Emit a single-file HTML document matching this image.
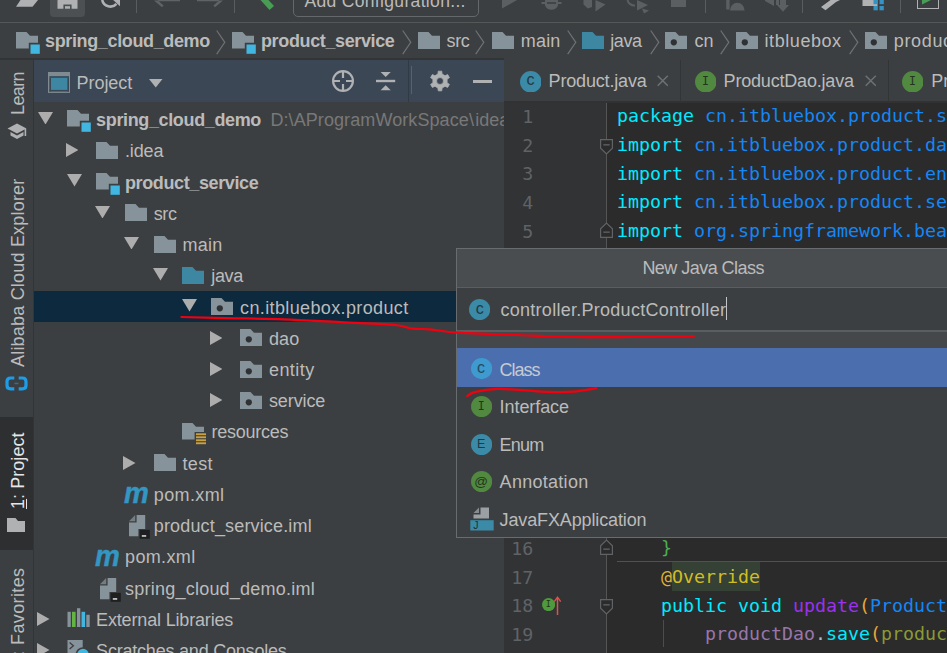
<!DOCTYPE html>
<html lang="en"><head><meta charset="utf-8"><title>IntelliJ IDEA - New Java Class</title>
<style>
html,body{margin:0;padding:0;background:#3c3f41;}
#app{position:relative;width:947px;height:653px;overflow:hidden;font-family:'Liberation Sans', sans-serif;}
.b{position:absolute;display:block;}
.t{position:absolute;white-space:nowrap;display:block;}
</style></head>
<body>
<div id="app">
<div class="b" style="left:0px;top:0px;width:947px;height:653px;background:#3c3f41;"></div>
<div class="b" style="left:0px;top:22px;width:947px;height:1px;background:#555759;"></div>
<svg class="b" style="left:14px;top:0px;" width="26" height="8" viewBox="0 0 26 8"><path d="M6.5,0H24L18.5,6.8H2Z" fill="#afb1b3"/></svg>
<div class="b" style="left:50px;top:-6px;width:35px;height:23px;background:#4c5052;border-radius:4px;"></div>
<svg class="b" style="left:57px;top:0px;" width="21" height="9" viewBox="0 0 21 9"><path d="M0.5,0H20.5V8.7H14.6V4.6H6.4V8.7H0.5Z" fill="#afb1b3"/><rect x="8" y="6.2" width="5" height="2.5" fill="#afb1b3"/></svg>
<svg class="b" style="left:100px;top:0px;" width="22" height="10" viewBox="0 0 22 10"><path d="M2.2,0A8.3,8.3 0 0 0 16.5,3.8" fill="none" stroke="#afb1b3" stroke-width="2.6"/><path d="M13.2,0H20V6.2Z" fill="#afb1b3"/></svg>
<div class="b" style="left:136px;top:0px;width:1px;height:13px;background:#5a5d5f;"></div>
<svg class="b" style="left:154px;top:0px;" width="26" height="8" viewBox="0 0 26 8"><path d="M0,0.5L8,7.2L9.6,5.4L3.8,0.5Z M4,0H26V1.2H4Z" fill="#606365"/></svg>
<svg class="b" style="left:197px;top:0px;" width="26" height="8" viewBox="0 0 26 8"><path d="M26,0.5L18,7.2L16.4,5.4L22.2,0.5Z M22,0H0V1.2H22Z" fill="#606365"/></svg>
<div class="b" style="left:234px;top:0px;width:1px;height:13px;background:#5a5d5f;"></div>
<svg class="b" style="left:258px;top:0px;" width="18" height="11" viewBox="0 0 18 11"><path d="M2.5,0L11.5,10L16,6L10.5,0Z" fill="#499c54"/></svg>
<div class="b" style="left:292.5px;top:-10.6px;width:186.5px;height:28px;border:1.6px solid #65686a;border-radius:5px;box-sizing:border-box;"></div>
<span class="t" style="left:304.40px;top:-10.46px;font-size:17.5px;line-height:23px;color:#bbbbbb;letter-spacing:0.336px;">Add Configuration...</span>
<svg class="b" style="left:502px;top:0px;" width="16" height="9" viewBox="0 0 16 9"><path d="M0,0H15L0,8.6Z" fill="#5c5f61"/></svg>
<svg class="b" style="left:541px;top:0px;" width="21" height="10" viewBox="0 0 21 10"><path d="M4,0H17V2H20.5V4H17V5.5Q15,9.8 10.5,9.8Q6,9.8 4,5.5V4H0.5V2H4Z" fill="#5c5f61"/><rect x="6" y="2.2" width="9" height="1.6" fill="#3c3f41"/></svg>
<svg class="b" style="left:583px;top:0px;" width="23" height="12" viewBox="0 0 23 12"><path d="M0.5,0H9V7L4.8,8.6L0.5,4.5Z M12.5,0L22.5,4.6L12.5,11.6Z" fill="#5c5f61"/></svg>
<svg class="b" style="left:626px;top:0px;" width="24" height="14" viewBox="0 0 24 14"><path d="M1.5,0A7,7 0 0 0 9,5.5" fill="none" stroke="#5c5f61" stroke-width="2"/><path d="M11,0L22,5L11,10.5Z M16,8.5L23,10.5L18,13.5Z" fill="#5c5f61"/></svg>
<div class="b" style="left:671px;top:0px;width:15px;height:7px;background:#5c5f61;"></div>
<div class="b" style="left:705px;top:0px;width:1px;height:13px;background:#5a5d5f;"></div>
<svg class="b" style="left:725px;top:0px;" width="20" height="11" viewBox="0 0 20 11"><path d="M1.2,0H4.6V9.6H1.2Z M5,10.5A7.2,7.6 0 0 1 19.6,10.5Z" fill="#5c5f61"/></svg>
<svg class="b" style="left:765px;top:0px;" width="24" height="12" viewBox="0 0 24 12"><path d="M0,0H9V6L4.5,3.5L0,1Z M11,0H14V5H11Z M15,0H21V5H24L18,11.7L12,5H15Z" fill="#5c5f61"/></svg>
<div class="b" style="left:802px;top:0px;width:1px;height:13px;background:#5a5d5f;"></div>
<svg class="b" style="left:820px;top:0px;" width="22" height="11" viewBox="0 0 22 11"><path d="M1,7L10.5,0H20L16,2L5.5,10.2Z" fill="#afb1b3"/></svg>
<svg class="b" style="left:862px;top:0px;" width="24" height="11" viewBox="0 0 24 11"><rect x="0.5" y="0" width="15" height="6" fill="#afb1b3"/><g fill="#3592c4"><rect x="11.5" y="0" width="4.3" height="4.2"/><rect x="17.5" y="0" width="4.3" height="4.2"/><rect x="11.5" y="6" width="4.3" height="4.3"/><rect x="17.5" y="6" width="4.3" height="4.3"/></g></svg>
<div class="b" style="left:900px;top:0px;width:1px;height:13px;background:#5a5d5f;"></div>
<div class="b" style="left:917px;top:-10px;width:22px;height:19px;border:1.3px solid #afb1b3;box-sizing:border-box;"></div>
<svg class="b" style="left:922px;top:0px;" width="9" height="5" viewBox="0 0 9 5"><path d="M0,0H9L0,4.6Z" fill="#499c54"/></svg>
<svg class="b" style="left:16.2px;top:32.2px;" width="25" height="23" viewBox="0 0 25 23"><path d="M0,0H10.5L14,3.8H22V10.8H12.8V16.5H0Z" fill="#87939a"/><rect x="14.5" y="12.5" width="9.3" height="9.3" fill="#40b6e0"/></svg>
<span class="t" style="left:45.00px;top:30.46px;font-size:18px;line-height:23px;color:#bbbbbb;font-weight:bold;letter-spacing:-0.361px;">spring_cloud_demo</span>
<svg class="b" style="left:215.5px;top:29.5px;" width="10" height="25" viewBox="0 0 10 25"><path d="M0.7,0.5L8.8,12.3L0.7,24.2" fill="none" stroke="#6f7274" stroke-width="1.2"/></svg>
<svg class="b" style="left:232.2px;top:32.2px;" width="25" height="23" viewBox="0 0 25 23"><path d="M0,0H10.5L14,3.8H22V10.8H12.8V16.5H0Z" fill="#87939a"/><rect x="14.5" y="12.5" width="9.3" height="9.3" fill="#40b6e0"/></svg>
<span class="t" style="left:261.00px;top:30.46px;font-size:18px;line-height:23px;color:#bbbbbb;font-weight:bold;letter-spacing:-0.371px;">product_service</span>
<svg class="b" style="left:401.5px;top:29.5px;" width="10" height="25" viewBox="0 0 10 25"><path d="M0.7,0.5L8.8,12.3L0.7,24.2" fill="none" stroke="#6f7274" stroke-width="1.2"/></svg>
<svg class="b" style="left:417.5px;top:32.2px;" width="22" height="17" viewBox="0 0 22 17"><path d="M0,0H10.5L14,3.8H22V17H0Z" fill="#87939a"/></svg>
<span class="t" style="left:446.50px;top:30.46px;font-size:18px;line-height:23px;color:#bbbbbb;letter-spacing:-0.367px;">src</span>
<svg class="b" style="left:475px;top:29.5px;" width="10" height="25" viewBox="0 0 10 25"><path d="M0.7,0.5L8.8,12.3L0.7,24.2" fill="none" stroke="#6f7274" stroke-width="1.2"/></svg>
<svg class="b" style="left:491.5px;top:32.2px;" width="22" height="17" viewBox="0 0 22 17"><path d="M0,0H10.5L14,3.8H22V17H0Z" fill="#87939a"/></svg>
<span class="t" style="left:520.70px;top:30.46px;font-size:18px;line-height:23px;color:#bbbbbb;letter-spacing:0.221px;">main</span>
<svg class="b" style="left:566.5px;top:29.5px;" width="10" height="25" viewBox="0 0 10 25"><path d="M0.7,0.5L8.8,12.3L0.7,24.2" fill="none" stroke="#6f7274" stroke-width="1.2"/></svg>
<svg class="b" style="left:582px;top:32.2px;" width="22" height="17" viewBox="0 0 22 17"><path d="M0,0H10.5L14,3.8H22V17H0Z" fill="#3e87a3"/></svg>
<span class="t" style="left:610.20px;top:30.46px;font-size:18px;line-height:23px;color:#bbbbbb;letter-spacing:-0.358px;">java</span>
<svg class="b" style="left:649.5px;top:29.5px;" width="10" height="25" viewBox="0 0 10 25"><path d="M0.7,0.5L8.8,12.3L0.7,24.2" fill="none" stroke="#6f7274" stroke-width="1.2"/></svg>
<svg class="b" style="left:665px;top:32.2px;" width="22" height="17" viewBox="0 0 22 17"><path d="M0,0H10.5L14,3.8H22V17H0Z" fill="#87939a"/><circle cx="8.8" cy="10.3" r="3.1" fill="#2f3234"/></svg>
<span class="t" style="left:694.50px;top:30.46px;font-size:18px;line-height:23px;color:#bbbbbb;letter-spacing:-0.008px;">cn</span>
<svg class="b" style="left:720px;top:29.5px;" width="10" height="25" viewBox="0 0 10 25"><path d="M0.7,0.5L8.8,12.3L0.7,24.2" fill="none" stroke="#6f7274" stroke-width="1.2"/></svg>
<svg class="b" style="left:735.5px;top:32.2px;" width="22" height="17" viewBox="0 0 22 17"><path d="M0,0H10.5L14,3.8H22V17H0Z" fill="#87939a"/><circle cx="8.8" cy="10.3" r="3.1" fill="#2f3234"/></svg>
<span class="t" style="left:764.50px;top:30.46px;font-size:18px;line-height:23px;color:#bbbbbb;letter-spacing:0.571px;">itbluebox</span>
<svg class="b" style="left:848.8px;top:29.5px;" width="10" height="25" viewBox="0 0 10 25"><path d="M0.7,0.5L8.8,12.3L0.7,24.2" fill="none" stroke="#6f7274" stroke-width="1.2"/></svg>
<svg class="b" style="left:864.5px;top:32.2px;" width="22" height="17" viewBox="0 0 22 17"><path d="M0,0H10.5L14,3.8H22V17H0Z" fill="#87939a"/><circle cx="8.8" cy="10.3" r="3.1" fill="#2f3234"/></svg>
<span class="t" style="left:893.70px;top:30.46px;font-size:18px;line-height:23px;color:#bbbbbb;letter-spacing:0.679px;">product</span>
<div class="b" style="left:0px;top:58px;width:947px;height:1.5px;background:#323435;"></div>
<div class="b" style="left:0px;top:59.5px;width:33px;height:600px;background:#3c3f41;"></div>
<div class="b" style="left:33px;top:59.5px;width:1px;height:600px;background:#323435;"></div>
<span class="t" style="left:7.26px;top:114.60px;font-size:18px;line-height:23px;color:#bbbbbb;transform-origin:0 0;transform:rotate(-90deg);letter-spacing:-0.609px;">Learn</span>
<svg class="b" style="left:6.5px;top:122.5px;" width="20" height="17" viewBox="0 0 20 17"><path d="M10,0.5L19.5,5.5L10,10.5L0.5,5.5Z" fill="#afb1b3"/><path d="M3.5,9V12.5L10,16L16.5,12.5V9L10,12.6Z" fill="#afb1b3"/><rect x="17.6" y="6" width="1.6" height="7" fill="#afb1b3"/></svg>
<span class="t" style="left:7.26px;top:366.50px;font-size:18px;line-height:23px;color:#bbbbbb;transform-origin:0 0;transform:rotate(-90deg);letter-spacing:0.200px;">Alibaba Cloud Explorer</span>
<svg class="b" style="left:5px;top:376.2px;" width="23" height="15" viewBox="0 0 23 15"><g fill="none" stroke="#1e9ce6" stroke-width="3.2"><path d="M9.3,2H5.6Q2,2 2,5.6V9.2Q2,12.8 5.6,12.8H9.3"/><path d="M13.7,2H17.4Q21,2 21,5.6V9.2Q21,12.8 17.4,12.8H13.7"/></g><rect x="9.5" y="6.7" width="4" height="1.5" fill="#1e9ce6" opacity="0.55"/></svg>
<div class="b" style="left:0px;top:417px;width:33px;height:133px;background:#2d2f30;"></div>
<span class="t" style="left:7.26px;top:509.40px;font-size:18px;line-height:23px;color:#e6e6e6;transform-origin:0 0;transform:rotate(-90deg);letter-spacing:0.055px;"><u style="text-decoration-thickness:1.3px;text-underline-offset:2px">1</u>: Project</span>
<svg class="b" style="left:6.9px;top:517.5px;" width="18" height="14.5" viewBox="0 0 18 14.5"><path d="M0,0H8.5L11,3H18V14.5H0Z" fill="#afb1b3"/></svg>
<span class="t" style="left:7.26px;top:666.00px;font-size:18px;line-height:23px;color:#bbbbbb;transform-origin:0 0;transform:rotate(-90deg);letter-spacing:0.363px;"><u style="text-decoration-thickness:1.3px;text-underline-offset:2px">2</u>: Favorites</span>
<div class="b" style="left:34px;top:59.5px;width:470px;height:42px;background:#3b4754;"></div>
<div class="b" style="left:408px;top:59.5px;width:1px;height:42px;background:#313b46;"></div>
<div class="b" style="left:411px;top:66px;width:1px;height:28.3px;background:#5d6167;"></div>
<svg class="b" style="left:47.5px;top:71.5px;" width="22.5" height="21" viewBox="0 0 22.5 21"><rect x="0.7" y="0.7" width="21" height="19.5" fill="#3e87a3" stroke="#7f8b91" stroke-width="1.4"/><rect x="0" y="0" width="22.5" height="4.2" fill="#7f8b91"/><rect x="1.4" y="4.2" width="19.6" height="1.6" fill="#3b4754"/><rect x="1.4" y="5.8" width="1.6" height="13.7" fill="#3b4754"/><rect x="19.4" y="5.8" width="1.6" height="13.7" fill="#3b4754"/><rect x="1.4" y="17.9" width="19.6" height="1.6" fill="#3b4754"/></svg>
<span class="t" style="left:76.60px;top:71.86px;font-size:18px;line-height:23px;color:#bbbbbb;letter-spacing:-0.062px;">Project</span>
<svg class="b" style="left:149px;top:79px;" width="13.5" height="8.5" viewBox="0 0 13.5 8.5"><path d="M0,0H13.5L6.75,8.5Z" fill="#afb1b3"/></svg>
<svg class="b" style="left:330.7px;top:69.4px;" width="24" height="24" viewBox="0 0 24 24"><g fill="none" stroke="#afb1b3" stroke-width="2.2"><circle cx="12" cy="12" r="9.9"/><path d="M12,2V9M12,15V22M2,12H9M15,12H22"/></g></svg>
<svg class="b" style="left:376px;top:71.4px;" width="20" height="20" viewBox="0 0 20 20"><rect x="0" y="8.8" width="19.2" height="2.4" fill="#afb1b3"/><path d="M4.6,1H14.8L9.7,5.9Z M4.6,19.2H14.8L9.7,14.3Z" fill="#afb1b3"/></svg>
<svg class="b" style="left:428.4px;top:69.4px;" width="24" height="24" viewBox="0 0 24 24"><path d="M10.23,2.16L13.77,2.16L14.04,4.99L17.05,6.73L19.64,5.55L21.41,8.61L19.09,10.26L19.09,13.74L21.41,15.39L19.64,18.45L17.05,17.27L14.04,19.01L13.77,21.84L10.23,21.84L9.96,19.01L6.95,17.27L4.36,18.45L2.59,15.39L4.91,13.74L4.91,10.26L2.59,8.61L4.36,5.55L6.95,6.73L9.96,4.99ZM8.50,12.00a3.5,3.5 0 1 0 7.0,0a3.5,3.5 0 1 0 -7.0,0Z" fill="#afb1b3" fill-rule="evenodd" stroke="#afb1b3" stroke-width="0.8" stroke-linejoin="round"/></svg>
<div class="b" style="left:473px;top:80.1px;width:19.3px;height:2.6px;background:#afb1b3;"></div>
<div class="b" style="left:34px;top:291.1px;width:470px;height:30.9px;background:#0d293e;"></div>
<svg class="b" style="left:37.8px;top:111.8px;" width="15" height="12.5" viewBox="0 0 15 12.5"><path d="M0,0H15L7.5,12.5Z" fill="#adadad"/></svg>
<svg class="b" style="left:67.1px;top:110.3px;" width="25" height="23" viewBox="0 0 25 23"><path d="M0,0H10.5L14,3.8H22V10.8H12.8V16.5H0Z" fill="#87939a"/><rect x="14.5" y="12.5" width="9.3" height="9.3" fill="#40b6e0"/></svg>
<span class="t" style="left:96.10px;top:109.06px;font-size:18px;line-height:23px;color:#bbbbbb;font-weight:bold;letter-spacing:-0.361px;">spring_cloud_demo</span>
<div class="b" style="left:265px;top:104.0px;width:239px;height:30px;overflow:hidden;"><span class="t" style="left:5.40px;top:5.06px;font-size:18px;line-height:23px;color:#787878;letter-spacing:0.088px;">D:\AProgramWorkSpace\</span><span class="t" style="left:210.20px;top:5.06px;font-size:18px;line-height:23px;color:#787878;">idea_workspace</span></div>
<svg class="b" style="left:65.8px;top:143.14000000000001px;" width="12.5" height="14" viewBox="0 0 12.5 14"><path d="M0,0V14L12.5,7Z" fill="#adadad"/></svg>
<svg class="b" style="left:95.89999999999999px;top:141.84px;" width="22" height="17" viewBox="0 0 22 17"><path d="M0,0H10.5L14,3.8H22V17H0Z" fill="#87939a"/></svg>
<span class="t" style="left:124.90px;top:140.30px;font-size:18px;line-height:23px;color:#bbbbbb;letter-spacing:-0.129px;">.idea</span>
<svg class="b" style="left:66.6px;top:174.28px;" width="15" height="12.5" viewBox="0 0 15 12.5"><path d="M0,0H15L7.5,12.5Z" fill="#adadad"/></svg>
<svg class="b" style="left:95.89999999999999px;top:172.78px;" width="25" height="23" viewBox="0 0 25 23"><path d="M0,0H10.5L14,3.8H22V10.8H12.8V16.5H0Z" fill="#87939a"/><rect x="14.5" y="12.5" width="9.3" height="9.3" fill="#40b6e0"/></svg>
<span class="t" style="left:124.90px;top:171.54px;font-size:18px;line-height:23px;color:#bbbbbb;font-weight:bold;letter-spacing:-0.371px;">product_service</span>
<svg class="b" style="left:95.4px;top:205.52px;" width="15" height="12.5" viewBox="0 0 15 12.5"><path d="M0,0H15L7.5,12.5Z" fill="#adadad"/></svg>
<svg class="b" style="left:124.7px;top:204.32px;" width="22" height="17" viewBox="0 0 22 17"><path d="M0,0H10.5L14,3.8H22V17H0Z" fill="#87939a"/></svg>
<span class="t" style="left:153.70px;top:202.78px;font-size:18px;line-height:23px;color:#bbbbbb;letter-spacing:-0.367px;">src</span>
<svg class="b" style="left:124.2px;top:236.76px;" width="15" height="12.5" viewBox="0 0 15 12.5"><path d="M0,0H15L7.5,12.5Z" fill="#adadad"/></svg>
<svg class="b" style="left:153.5px;top:235.55999999999997px;" width="22" height="17" viewBox="0 0 22 17"><path d="M0,0H10.5L14,3.8H22V17H0Z" fill="#87939a"/></svg>
<span class="t" style="left:182.50px;top:234.02px;font-size:18px;line-height:23px;color:#bbbbbb;letter-spacing:0.221px;">main</span>
<svg class="b" style="left:153.0px;top:268.0px;" width="15" height="12.5" viewBox="0 0 15 12.5"><path d="M0,0H15L7.5,12.5Z" fill="#adadad"/></svg>
<svg class="b" style="left:182.3px;top:266.8px;" width="22" height="17" viewBox="0 0 22 17"><path d="M0,0H10.5L14,3.8H22V17H0Z" fill="#3e87a3"/></svg>
<span class="t" style="left:211.30px;top:265.26px;font-size:18px;line-height:23px;color:#bbbbbb;letter-spacing:-0.358px;">java</span>
<svg class="b" style="left:181.8px;top:299.24px;" width="15" height="12.5" viewBox="0 0 15 12.5"><path d="M0,0H15L7.5,12.5Z" fill="#adadad"/></svg>
<svg class="b" style="left:211.10000000000002px;top:298.04px;" width="22" height="17" viewBox="0 0 22 17"><path d="M0,0H10.5L14,3.8H22V17H0Z" fill="#87939a"/><circle cx="8.8" cy="10.3" r="3.1" fill="#2f3234"/></svg>
<span class="t" style="left:240.10px;top:296.50px;font-size:18px;line-height:23px;color:#bbbbbb;letter-spacing:0.365px;">cn.itbluebox.product</span>
<svg class="b" style="left:209.8px;top:330.5799999999999px;" width="12.5" height="14" viewBox="0 0 12.5 14"><path d="M0,0V14L12.5,7Z" fill="#adadad"/></svg>
<svg class="b" style="left:239.90000000000003px;top:329.28px;" width="22" height="17" viewBox="0 0 22 17"><path d="M0,0H10.5L14,3.8H22V17H0Z" fill="#87939a"/><circle cx="8.8" cy="10.3" r="3.1" fill="#2f3234"/></svg>
<span class="t" style="left:268.90px;top:327.74px;font-size:18px;line-height:23px;color:#bbbbbb;letter-spacing:0.118px;">dao</span>
<svg class="b" style="left:209.8px;top:361.81999999999994px;" width="12.5" height="14" viewBox="0 0 12.5 14"><path d="M0,0V14L12.5,7Z" fill="#adadad"/></svg>
<svg class="b" style="left:239.90000000000003px;top:360.52px;" width="22" height="17" viewBox="0 0 22 17"><path d="M0,0H10.5L14,3.8H22V17H0Z" fill="#87939a"/><circle cx="8.8" cy="10.3" r="3.1" fill="#2f3234"/></svg>
<span class="t" style="left:268.90px;top:358.98px;font-size:18px;line-height:23px;color:#bbbbbb;letter-spacing:0.478px;">entity</span>
<svg class="b" style="left:209.8px;top:393.05999999999995px;" width="12.5" height="14" viewBox="0 0 12.5 14"><path d="M0,0V14L12.5,7Z" fill="#adadad"/></svg>
<svg class="b" style="left:239.90000000000003px;top:391.76px;" width="22" height="17" viewBox="0 0 22 17"><path d="M0,0H10.5L14,3.8H22V17H0Z" fill="#87939a"/><circle cx="8.8" cy="10.3" r="3.1" fill="#2f3234"/></svg>
<span class="t" style="left:268.90px;top:390.22px;font-size:18px;line-height:23px;color:#bbbbbb;letter-spacing:-0.088px;">service</span>
<svg class="b" style="left:182.4px;top:422.59999999999997px;" width="25" height="23" viewBox="0 0 25 23"><path d="M0,0H10.5L14,3.8H22V9H12.6V16.5H0Z" fill="#87939a"/><g fill="#c9a23f"><rect x="14" y="10.3" width="10" height="1.9"/><rect x="14" y="13.3" width="10" height="1.9"/><rect x="14" y="16.3" width="10" height="1.9"/><rect x="14" y="19.3" width="10" height="1.9"/></g></svg>
<span class="t" style="left:211.40px;top:421.46px;font-size:18px;line-height:23px;color:#bbbbbb;letter-spacing:-0.237px;">resources</span>
<svg class="b" style="left:123.4px;top:455.53999999999996px;" width="12.5" height="14" viewBox="0 0 12.5 14"><path d="M0,0V14L12.5,7Z" fill="#adadad"/></svg>
<svg class="b" style="left:153.5px;top:454.24px;" width="22" height="17" viewBox="0 0 22 17"><path d="M0,0H10.5L14,3.8H22V17H0Z" fill="#87939a"/></svg>
<span class="t" style="left:182.50px;top:452.70px;font-size:18px;line-height:23px;color:#bbbbbb;letter-spacing:0.371px;">test</span>
<span class="t" style="left:124.2px;top:474.18px;font-size:30px;line-height:38px;color:#3396c3;font-weight:bold;font-style:italic;transform-origin:0 0;transform:scaleX(0.93);-webkit-text-stroke:0.5px #3396c3;">m</span>
<span class="t" style="left:153.80px;top:483.94px;font-size:18px;line-height:23px;color:#bbbbbb;letter-spacing:0.369px;">pom.xml</span>
<svg class="b" style="left:128.6px;top:515.12px;" width="22" height="24" viewBox="0 0 22 24"><path d="M7.6,0H16.2V14H9.4V21.2H0V7.6H7.6Z" fill="#87939a"/><path d="M6.2,0V6.2H0Z" fill="#87939a" opacity="0.75"/><rect x="10.6" y="14.8" width="10.2" height="9" fill="#1e1f20"/><rect x="12.8" y="20.2" width="4.4" height="1.5" fill="#e0e0e0"/></svg>
<span class="t" style="left:153.80px;top:515.18px;font-size:18px;line-height:23px;color:#bbbbbb;letter-spacing:0.155px;">product_service.iml</span>
<span class="t" style="left:95.4px;top:536.66px;font-size:30px;line-height:38px;color:#3396c3;font-weight:bold;font-style:italic;transform-origin:0 0;transform:scaleX(0.93);-webkit-text-stroke:0.5px #3396c3;">m</span>
<span class="t" style="left:125.00px;top:546.42px;font-size:18px;line-height:23px;color:#bbbbbb;letter-spacing:0.369px;">pom.xml</span>
<svg class="b" style="left:99.8px;top:577.5999999999999px;" width="22" height="24" viewBox="0 0 22 24"><path d="M7.6,0H16.2V14H9.4V21.2H0V7.6H7.6Z" fill="#87939a"/><path d="M6.2,0V6.2H0Z" fill="#87939a" opacity="0.75"/><rect x="10.6" y="14.8" width="10.2" height="9" fill="#1e1f20"/><rect x="12.8" y="20.2" width="4.4" height="1.5" fill="#e0e0e0"/></svg>
<span class="t" style="left:125.00px;top:577.66px;font-size:18px;line-height:23px;color:#bbbbbb;letter-spacing:0.233px;">spring_cloud_demo.iml</span>
<svg class="b" style="left:37.0px;top:611.7399999999999px;" width="12.5" height="14" viewBox="0 0 12.5 14"><path d="M0,0V14L12.5,7Z" fill="#adadad"/></svg>
<svg class="b" style="left:67px;top:606px;" width="24" height="22" viewBox="0 0 24 22"><rect x="0.5" y="5.8" width="3.3" height="15.2" fill="#87939a"/><rect x="5" y="5.8" width="3.6" height="15.2" fill="#62b543"/><rect x="10" y="2.2" width="3.3" height="18.8" fill="#87939a"/><rect x="14.5" y="5.8" width="3.6" height="15.2" fill="#40b6e0"/><rect x="19.3" y="8.8" width="3.4" height="12.2" fill="#87939a"/></svg>
<span class="t" style="left:96.10px;top:608.90px;font-size:18px;line-height:23px;color:#bbbbbb;letter-spacing:-0.165px;">External Libraries</span>
<svg class="b" style="left:37.0px;top:642.9799999999999px;" width="12.5" height="14" viewBox="0 0 12.5 14"><path d="M0,0V14L12.5,7Z" fill="#adadad"/></svg>
<svg class="b" style="left:67.3px;top:640.1px;" width="24" height="22" viewBox="0 0 24 22"><rect x="0.5" y="0" width="15.2" height="14" fill="#87939a"/><path d="M2.6,2.6L6.4,5.8L2.6,9" fill="none" stroke="#3c3f41" stroke-width="1.3"/><circle cx="16" cy="14.6" r="6.6" fill="#40b6e0" stroke="#3c3f41" stroke-width="1.6"/></svg>
<span class="t" style="left:96.10px;top:640.14px;font-size:18px;line-height:23px;color:#bbbbbb;letter-spacing:-0.210px;">Scratches and Consoles</span>
<div class="b" style="left:504px;top:58px;width:443px;height:44px;background:#3c3f41;"></div>
<div class="b" style="left:504px;top:101px;width:443px;height:1.5px;background:#323232;"></div>
<div class="b" style="left:504px;top:102.5px;width:102.5px;height:560px;background:#313335;"></div>
<div class="b" style="left:606.5px;top:102.5px;width:341px;height:560px;background:#2b2b2b;"></div>
<div class="b" style="left:606px;top:102.5px;width:1px;height:560px;background:#555555;"></div>
<svg class="b" style="left:519.8000000000001px;top:70.60000000000001px;" width="21.6" height="21.6" viewBox="0 0 21.6 21.6"><circle cx="10.8" cy="10.8" r="10.8" fill="#3a8aa8"/></svg><span class="t" style="left:519.8000000000001px;top:69.30000000000001px;width:21.6px;height:21.6px;line-height:21.6px;text-align:center;font-size:16px;color:#25383f;font-family:'Liberation Sans', sans-serif;">c</span>
<span class="t" style="left:548.60px;top:70.46px;font-size:18px;line-height:23px;color:#bbbbbb;letter-spacing:-0.172px;">Product.java</span>
<svg class="b" style="left:657px;top:75.25px;" width="11.5" height="11.5" viewBox="0 0 11.5 11.5"><path d="M0.7,0.7L10.8,10.8M10.8,0.7L0.7,10.8" stroke="#6e7173" stroke-width="1.5" fill="none"/></svg>
<div class="b" style="left:680px;top:59.5px;width:1px;height:42px;background:#323435;"></div>
<svg class="b" style="left:694.7px;top:70.60000000000001px;" width="21.6" height="21.6" viewBox="0 0 21.6 21.6"><circle cx="10.8" cy="10.8" r="10.8" fill="#50893f"/></svg><span class="t" style="left:694.7px;top:70.80000000000001px;width:21.6px;height:21.6px;line-height:21.6px;text-align:center;font-size:11.5px;color:#23351d;font-family:'DejaVu Sans Mono', 'Liberation Mono', monospace;">I</span>
<span class="t" style="left:723.60px;top:70.46px;font-size:18px;line-height:23px;color:#bbbbbb;letter-spacing:-0.192px;">ProductDao.java</span>
<svg class="b" style="left:865px;top:75.25px;" width="11.5" height="11.5" viewBox="0 0 11.5 11.5"><path d="M0.7,0.7L10.8,10.8M10.8,0.7L0.7,10.8" stroke="#6e7173" stroke-width="1.5" fill="none"/></svg>
<div class="b" style="left:888px;top:59.5px;width:1px;height:42px;background:#323435;"></div>
<svg class="b" style="left:901.6px;top:70.60000000000001px;" width="21.6" height="21.6" viewBox="0 0 21.6 21.6"><circle cx="10.8" cy="10.8" r="10.8" fill="#50893f"/></svg><span class="t" style="left:901.6px;top:70.80000000000001px;width:21.6px;height:21.6px;line-height:21.6px;text-align:center;font-size:11.5px;color:#23351d;font-family:'DejaVu Sans Mono', 'Liberation Mono', monospace;">I</span>
<span class="t" style="left:931.20px;top:70.46px;font-size:18px;line-height:23px;color:#bbbbbb;letter-spacing:0.154px;">ProductService.java</span>
<div class="b" style="left:617px;top:561.3px;width:330px;height:1px;background:#4f5254;"></div>
<div class="b" style="left:672px;top:562.4px;width:88px;height:28.4px;background:#344134;"></div>
<div class="b" style="left:663.4px;top:620px;width:1px;height:27px;background:#3c5a38;"></div>
<span class="t" style="left:522.20px;top:104.78px;font-size:18.27px;line-height:24px;color:#606366;font-family:'DejaVu Sans Mono', 'Liberation Mono', monospace;">1</span>
<span class="t" style="left:617.00px;top:104.08px;font-size:18.27px;line-height:24px;color:#00eaff;font-family:'DejaVu Sans Mono', 'Liberation Mono', monospace;white-space:pre;">package </span><span class="t" style="left:705.00px;top:104.08px;font-size:18.27px;line-height:24px;color:#1487f5;font-family:'DejaVu Sans Mono', 'Liberation Mono', monospace;white-space:pre;">cn.itbluebox.product.service.impl;</span>
<span class="t" style="left:522.20px;top:133.58px;font-size:18.27px;line-height:24px;color:#606366;font-family:'DejaVu Sans Mono', 'Liberation Mono', monospace;">2</span>
<span class="t" style="left:617.00px;top:132.88px;font-size:18.27px;line-height:24px;color:#00eaff;font-family:'DejaVu Sans Mono', 'Liberation Mono', monospace;white-space:pre;">import </span><span class="t" style="left:694.00px;top:132.88px;font-size:18.27px;line-height:24px;color:#1487f5;font-family:'DejaVu Sans Mono', 'Liberation Mono', monospace;white-space:pre;">cn.itbluebox.product.dao.ProductDao;</span>
<span class="t" style="left:522.20px;top:162.38px;font-size:18.27px;line-height:24px;color:#606366;font-family:'DejaVu Sans Mono', 'Liberation Mono', monospace;">3</span>
<span class="t" style="left:617.00px;top:161.68px;font-size:18.27px;line-height:24px;color:#00eaff;font-family:'DejaVu Sans Mono', 'Liberation Mono', monospace;white-space:pre;">import </span><span class="t" style="left:694.00px;top:161.68px;font-size:18.27px;line-height:24px;color:#1487f5;font-family:'DejaVu Sans Mono', 'Liberation Mono', monospace;white-space:pre;">cn.itbluebox.product.entity.Product;</span>
<span class="t" style="left:522.20px;top:191.18px;font-size:18.27px;line-height:24px;color:#606366;font-family:'DejaVu Sans Mono', 'Liberation Mono', monospace;">4</span>
<span class="t" style="left:617.00px;top:190.48px;font-size:18.27px;line-height:24px;color:#00eaff;font-family:'DejaVu Sans Mono', 'Liberation Mono', monospace;white-space:pre;">import </span><span class="t" style="left:694.00px;top:190.48px;font-size:18.27px;line-height:24px;color:#1487f5;font-family:'DejaVu Sans Mono', 'Liberation Mono', monospace;white-space:pre;">cn.itbluebox.product.service.ProductService;</span>
<span class="t" style="left:522.20px;top:219.98px;font-size:18.27px;line-height:24px;color:#606366;font-family:'DejaVu Sans Mono', 'Liberation Mono', monospace;">5</span>
<span class="t" style="left:617.00px;top:219.28px;font-size:18.27px;line-height:24px;color:#00eaff;font-family:'DejaVu Sans Mono', 'Liberation Mono', monospace;white-space:pre;">import </span><span class="t" style="left:694.00px;top:219.28px;font-size:18.27px;line-height:24px;color:#1487f5;font-family:'DejaVu Sans Mono', 'Liberation Mono', monospace;white-space:pre;">org.springframework.beans.factory.annotation.Autowired;</span>
<span class="t" style="left:511.20px;top:536.78px;font-size:18.27px;line-height:24px;color:#606366;font-family:'DejaVu Sans Mono', 'Liberation Mono', monospace;">16</span>
<span class="t" style="left:617.00px;top:536.08px;font-size:18.27px;line-height:24px;color:#00eaff;font-family:'DejaVu Sans Mono', 'Liberation Mono', monospace;white-space:pre;">    </span><span class="t" style="left:661.00px;top:536.08px;font-size:18.27px;line-height:24px;color:#4caf50;font-family:'DejaVu Sans Mono', 'Liberation Mono', monospace;white-space:pre;">}</span>
<span class="t" style="left:511.20px;top:565.58px;font-size:18.27px;line-height:24px;color:#606366;font-family:'DejaVu Sans Mono', 'Liberation Mono', monospace;">17</span>
<span class="t" style="left:617.00px;top:564.88px;font-size:18.27px;line-height:24px;color:#00eaff;font-family:'DejaVu Sans Mono', 'Liberation Mono', monospace;white-space:pre;">    </span><span class="t" style="left:661.00px;top:564.88px;font-size:18.27px;line-height:24px;color:#dcb232;font-family:'DejaVu Sans Mono', 'Liberation Mono', monospace;white-space:pre;">@</span><span class="t" style="left:672.00px;top:564.88px;font-size:18.27px;line-height:24px;color:#d2bd22;font-family:'DejaVu Sans Mono', 'Liberation Mono', monospace;white-space:pre;">Override</span>
<span class="t" style="left:511.20px;top:594.38px;font-size:18.27px;line-height:24px;color:#606366;font-family:'DejaVu Sans Mono', 'Liberation Mono', monospace;">18</span>
<span class="t" style="left:617.00px;top:593.68px;font-size:18.27px;line-height:24px;color:#00eaff;font-family:'DejaVu Sans Mono', 'Liberation Mono', monospace;white-space:pre;">    </span><span class="t" style="left:661.00px;top:593.68px;font-size:18.27px;line-height:24px;color:#00eaff;font-family:'DejaVu Sans Mono', 'Liberation Mono', monospace;white-space:pre;">public void </span><span class="t" style="left:793.00px;top:593.68px;font-size:18.27px;line-height:24px;color:#9b30f0;font-family:'DejaVu Sans Mono', 'Liberation Mono', monospace;white-space:pre;">update</span><span class="t" style="left:859.00px;top:593.68px;font-size:18.27px;line-height:24px;color:#e8a838;font-family:'DejaVu Sans Mono', 'Liberation Mono', monospace;white-space:pre;">(</span><span class="t" style="left:870.00px;top:593.68px;font-size:18.27px;line-height:24px;color:#1487f5;font-family:'DejaVu Sans Mono', 'Liberation Mono', monospace;white-space:pre;">Product product) {</span>
<span class="t" style="left:511.20px;top:623.18px;font-size:18.27px;line-height:24px;color:#606366;font-family:'DejaVu Sans Mono', 'Liberation Mono', monospace;">19</span>
<span class="t" style="left:617.00px;top:622.48px;font-size:18.27px;line-height:24px;color:#00eaff;font-family:'DejaVu Sans Mono', 'Liberation Mono', monospace;white-space:pre;">        </span><span class="t" style="left:705.00px;top:622.48px;font-size:18.27px;line-height:24px;color:#9876aa;font-family:'DejaVu Sans Mono', 'Liberation Mono', monospace;white-space:pre;">productDao</span><span class="t" style="left:815.00px;top:622.48px;font-size:18.27px;line-height:24px;color:#a9b7c6;font-family:'DejaVu Sans Mono', 'Liberation Mono', monospace;white-space:pre;">.</span><span class="t" style="left:826.00px;top:622.48px;font-size:18.27px;line-height:24px;color:#00eaff;font-family:'DejaVu Sans Mono', 'Liberation Mono', monospace;white-space:pre;">save</span><span class="t" style="left:870.00px;top:622.48px;font-size:18.27px;line-height:24px;color:#e8a838;font-family:'DejaVu Sans Mono', 'Liberation Mono', monospace;white-space:pre;">(</span><span class="t" style="left:881.00px;top:622.48px;font-size:18.27px;line-height:24px;color:#8a9a35;font-family:'DejaVu Sans Mono', 'Liberation Mono', monospace;white-space:pre;">product</span><span class="t" style="left:958.00px;top:622.48px;font-size:18.27px;line-height:24px;color:#e8a838;font-family:'DejaVu Sans Mono', 'Liberation Mono', monospace;white-space:pre;">);</span>
<svg class="b" style="left:599.8px;top:138.5px;" width="13" height="16" viewBox="0 0 13 16"><path d="M0.6,0.6H12.4V9.2L6.5,15L0.6,9.2Z" fill="#2b2b2b" stroke="#606366" stroke-width="1.2"/><rect x="3.3" y="5.2" width="6.4" height="1.3" fill="#606366"/></svg>
<svg class="b" style="left:599.8px;top:222px;" width="13" height="16" viewBox="0 0 13 16"><path d="M0.6,15.4H12.4V6.8L6.5,1L0.6,6.8Z" fill="#2b2b2b" stroke="#606366" stroke-width="1.2"/><rect x="3.3" y="9.5" width="6.4" height="1.3" fill="#606366"/></svg>
<svg class="b" style="left:599.8px;top:539px;" width="13" height="16" viewBox="0 0 13 16"><path d="M0.6,15.4H12.4V6.8L6.5,1L0.6,6.8Z" fill="#2b2b2b" stroke="#606366" stroke-width="1.2"/><rect x="3.3" y="9.5" width="6.4" height="1.3" fill="#606366"/></svg>
<svg class="b" style="left:599.8px;top:598.5px;" width="13" height="16" viewBox="0 0 13 16"><path d="M0.6,0.6H12.4V9.2L6.5,15L0.6,9.2Z" fill="#2b2b2b" stroke="#606366" stroke-width="1.2"/><rect x="3.3" y="5.2" width="6.4" height="1.3" fill="#606366"/></svg>
<svg class="b" style="left:541.6999999999999px;top:598.1999999999999px;" width="13.2" height="13.2" viewBox="0 0 13.2 13.2"><circle cx="6.6" cy="6.6" r="6.6" fill="#4f9a3c"/></svg><span class="t" style="left:541.6999999999999px;top:598.1999999999999px;width:13.2px;height:13.2px;line-height:13.2px;text-align:center;font-size:8.5px;color:#1f3318;font-family:'DejaVu Sans Mono', 'Liberation Mono', monospace;">I</span>
<svg class="b" style="left:552.5px;top:595.5px;" width="9" height="20" viewBox="0 0 9 20"><path d="M4.5,19V2" stroke="#e0524e" stroke-width="1.5" fill="none"/><path d="M1.3,5.6L4.5,1.2L7.7,5.6" stroke="#e0524e" stroke-width="1.4" fill="none"/></svg>
<div class="b" style="left:455.9px;top:248.0px;width:500px;height:289.6px;background:#3c3f41;border:1px solid #696c6e;box-sizing:border-box;"></div>
<div class="b" style="left:456.9px;top:249.3px;width:495px;height:37.7px;background:#4a4d50;"></div>
<div class="b" style="left:456.9px;top:287px;width:495px;height:1px;background:#5b5e60;"></div>
<div class="b" style="left:456.9px;top:288px;width:495px;height:42px;background:#3c3f41;"></div>
<div class="b" style="left:456.9px;top:330.4px;width:495px;height:1.5px;background:#5b5e60;"></div>
<div class="b" style="left:456.9px;top:331.9px;width:495px;height:16.4px;background:#45484a;"></div>
<div class="b" style="left:456.9px;top:348.2px;width:495px;height:38.6px;background:#4b6eaf;"></div>
<span class="t" style="left:642.40px;top:257.26px;font-size:18px;line-height:23px;color:#bbbbbb;letter-spacing:-0.539px;">New Java Class</span>
<svg class="b" style="left:469.2px;top:298.79999999999995px;" width="21.2" height="21.2" viewBox="0 0 21.2 21.2"><circle cx="10.6" cy="10.6" r="10.6" fill="#3a8aa8"/></svg><span class="t" style="left:469.2px;top:297.49999999999994px;width:21.2px;height:21.2px;line-height:21.2px;text-align:center;font-size:16px;color:#25383f;font-family:'Liberation Sans', sans-serif;">c</span>
<span class="t" style="left:500.50px;top:299.16px;font-size:18px;line-height:23px;color:#bbbbbb;letter-spacing:0.271px;">controller.ProductController</span>
<div class="b" style="left:726.3px;top:297.3px;width:1.1px;height:22.5px;background:#c4c4c4;"></div>
<svg class="b" style="left:470.5px;top:358.4px;" width="21.2" height="21.2" viewBox="0 0 21.2 21.2"><circle cx="10.6" cy="10.6" r="10.6" fill="#3d9bd0"/></svg><span class="t" style="left:470.5px;top:357.09999999999997px;width:21.2px;height:21.2px;line-height:21.2px;text-align:center;font-size:16px;color:#274a60;font-family:'Liberation Sans', sans-serif;">c</span>
<span class="t" style="left:499.60px;top:359.26px;font-size:18px;line-height:23px;color:#c6cad2;letter-spacing:-1.023px;">Class</span>
<svg class="b" style="left:470.5px;top:396.0px;" width="21.2" height="21.2" viewBox="0 0 21.2 21.2"><circle cx="10.6" cy="10.6" r="10.6" fill="#50893f"/></svg><span class="t" style="left:470.5px;top:396.2px;width:21.2px;height:21.2px;line-height:21.2px;text-align:center;font-size:11.5px;color:#23351d;font-family:'DejaVu Sans Mono', 'Liberation Mono', monospace;">I</span>
<span class="t" style="left:499.60px;top:396.26px;font-size:18px;line-height:23px;color:#bbbbbb;letter-spacing:-0.072px;">Interface</span>
<svg class="b" style="left:470.5px;top:433.59999999999997px;" width="21.2" height="21.2" viewBox="0 0 21.2 21.2"><circle cx="10.6" cy="10.6" r="10.6" fill="#3a8aa8"/></svg><span class="t" style="left:470.5px;top:433.9px;width:21.2px;height:21.2px;line-height:21.2px;text-align:center;font-size:12.5px;color:#25383f;font-family:'Liberation Sans', sans-serif;">E</span>
<span class="t" style="left:499.60px;top:433.76px;font-size:18px;line-height:23px;color:#bbbbbb;letter-spacing:-0.783px;">Enum</span>
<svg class="b" style="left:470.5px;top:471.09999999999997px;" width="21.2" height="21.2" viewBox="0 0 21.2 21.2"><circle cx="10.6" cy="10.6" r="10.6" fill="#50893f"/></svg><span class="t" style="left:470.5px;top:470.49999999999994px;width:21.2px;height:21.2px;line-height:21.2px;text-align:center;font-size:13.5px;color:#23351d;font-family:'Liberation Sans', sans-serif;">@</span>
<span class="t" style="left:499.60px;top:471.26px;font-size:18px;line-height:23px;color:#bbbbbb;letter-spacing:0.282px;">Annotation</span>
<svg class="b" style="left:470px;top:507px;" width="24" height="24" viewBox="0 0 24 24"><path d="M10.5,0.5H19V11.5H3.5V7.5H10.5Z" fill="#9aa0a4"/><path d="M9,0.5V6H3.5Z" fill="#9aa0a4" opacity="0.8"/><rect x="0.3" y="13.2" width="23.4" height="10.3" fill="#3a8aa8"/></svg>
<span class="t" style="left:473.2px;top:519.6px;font-size:10.5px;line-height:11px;color:#1d3038;">J</span>
<span class="t" style="left:499.60px;top:508.76px;font-size:18px;line-height:23px;color:#bbbbbb;letter-spacing:-0.129px;">JavaFXApplication</span>
<svg class="b" style="left:0px;top:0px;pointer-events:none;" width="947" height="653" viewBox="0 0 947 653"><g fill="none" stroke="#f2000f" stroke-width="2.2" stroke-linecap="round" stroke-linejoin="round"><path d="M181.4,317.0C189.0,317.2 209.9,317.7 227.0,318.1C244.1,318.5 265.0,318.6 284.0,319.3C303.0,320.0 322.4,321.2 341.0,322.1C359.6,323.1 383.4,323.9 395.3,325.0C407.2,326.1 406.6,328.0 412.4,328.7C418.2,329.4 422.3,328.6 430.0,329.3C437.7,330.0 444.2,331.8 458.5,332.7C472.8,333.6 496.5,334.3 515.5,335.0C534.5,335.7 553.6,336.7 572.6,337.0C591.6,337.3 609.4,337.1 629.6,337.0C649.8,336.9 683.1,336.2 693.8,336.1"/><path d="M467.2,396.1C468.6,395.4 470.3,393.1 475.3,391.9C480.3,390.7 489.3,389.2 497.2,388.9C505.1,388.6 514.1,389.7 522.6,390.2C531.1,390.7 539.5,391.7 547.9,391.9C556.3,392.1 565.2,392.2 573.2,391.6C581.2,391.0 592.2,388.8 596.0,388.2"/></g></svg>
</div>
</body></html>
